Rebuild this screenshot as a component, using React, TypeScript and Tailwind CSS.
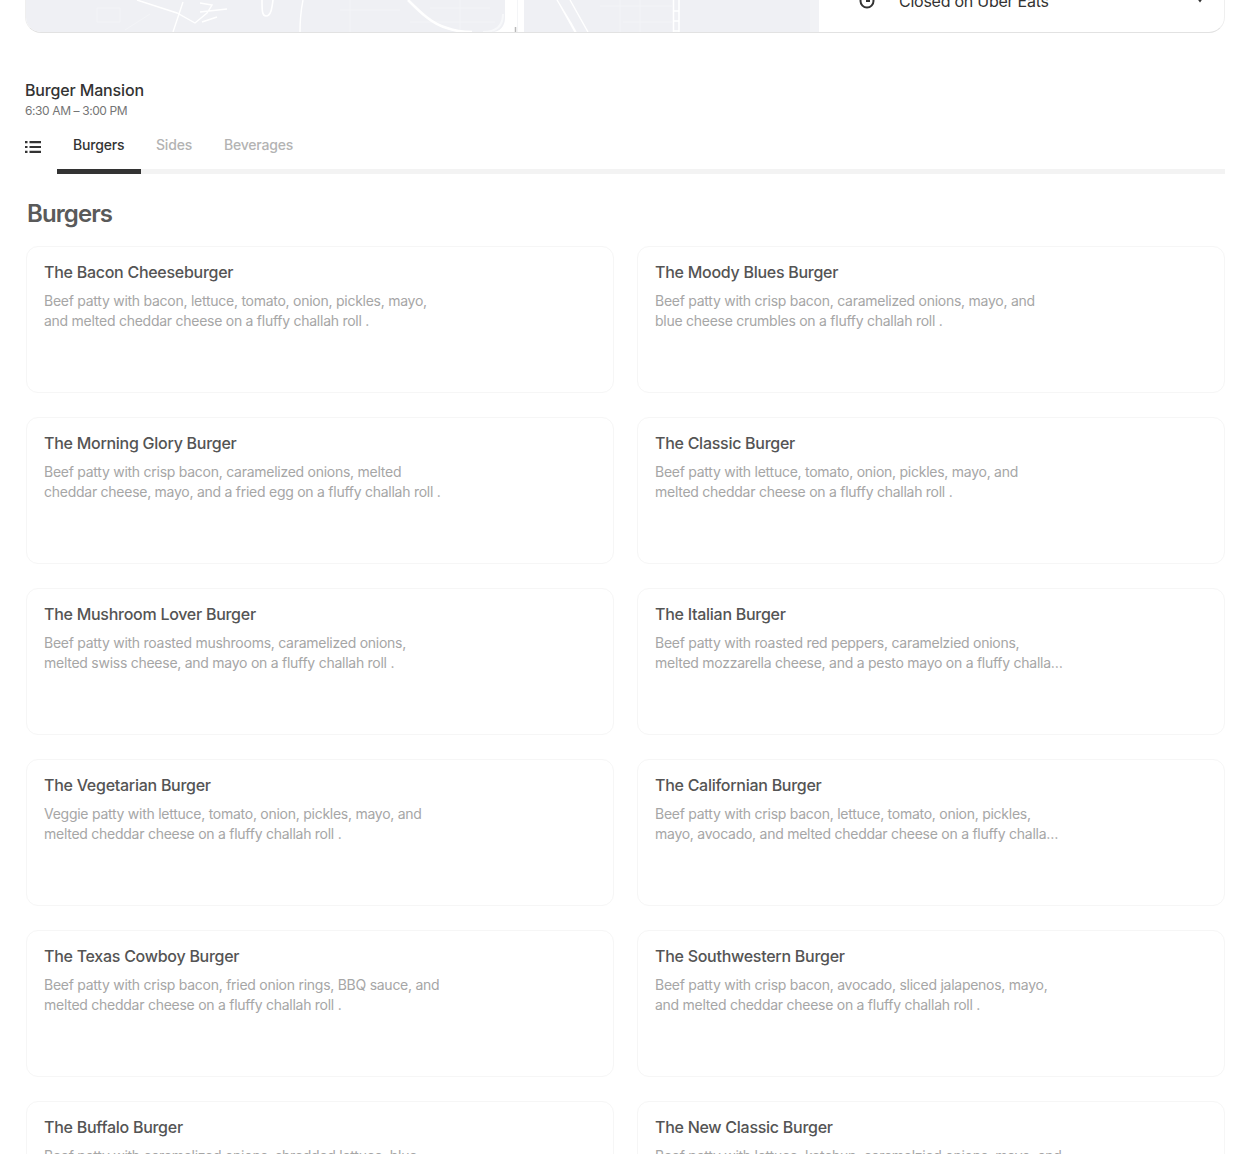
const ITEMS = [
  ["The Bacon Cheeseburger", "Beef patty with bacon, lettuce, tomato, onion, pickles, mayo, and melted cheddar cheese on a fluffy challah roll ."],
  ["The Moody Blues Burger", "Beef patty with crisp bacon, caramelized onions, mayo, and blue cheese crumbles on a fluffy challah roll ."],
  ["The Morning Glory Burger", "Beef patty with crisp bacon, caramelized onions, melted cheddar cheese, mayo, and a fried egg on a fluffy challah roll ."],
  ["The Classic Burger", "Beef patty with lettuce, tomato, onion, pickles, mayo, and melted cheddar cheese on a fluffy challah roll ."],
  ["The Mushroom Lover Burger", "Beef patty with roasted mushrooms, caramelized onions, melted swiss cheese, and mayo on a fluffy challah roll ."],
  ["The Italian Burger", "Beef patty with roasted red peppers, caramelzied onions, melted mozzarella cheese, and a pesto mayo on a fluffy challah roll ."],
  ["The Vegetarian Burger", "Veggie patty with lettuce, tomato, onion, pickles, mayo, and melted cheddar cheese on a fluffy challah roll ."],
  ["The Californian Burger", "Beef patty with crisp bacon, lettuce, tomato, onion, pickles, mayo, avocado, and melted cheddar cheese on a fluffy challah roll ."],
  ["The Texas Cowboy Burger", "Beef patty with crisp bacon, fried onion rings, BBQ sauce, and melted cheddar cheese on a fluffy challah roll ."],
  ["The Southwestern Burger", "Beef patty with crisp bacon, avocado, sliced jalapenos, mayo, and melted cheddar cheese on a fluffy challah roll ."],
  ["The Buffalo Burger", "Beef patty with caramelized onions, shredded lettuce, blue cheese, and buffalo sauce on a fluffy challah roll ."],
  ["The New Classic Burger", "Beef patty with lettuce, ketchup, caramelzied onions, mayo, and melted cheddar cheese on a fluffy challah roll ."],
];

// coordinates are page pixels, hence the viewBox offset
function MapRoads() {
  return (
    <svg className="block h-[32px] w-[793px]" viewBox="26 0 793 32" fill="none" stroke="#ffffff">
      {/* faint blocks */}
      <path d="M97 8 H120 V22 H97 Z M125 30 L150 14 M620 0 V32 M640 0 V32 M623 22 H672 M600 6 H672 M340 10 H400 M350 0 V32 M430 8 H490 M460 0 V32 M410 22 H495" stroke="#f3f4f7" strokeWidth="1" />
      <path d="M810 0 H819 V32 H810 Z" fill="#f1f2f5" stroke="none" />
      {/* bent road cluster */}
      <path d="M137 0 L177 13 L195 23 L207 13 L212 5 L200 3 M173 32 L183 2 M200 12 L227 9 M217 17 L202 22" strokeWidth="1.4" />
      {/* loop */}
      <path d="M262 0 C262 10 262 16 266 16 C271 16 272 8 273 0" strokeWidth="1.6" />
      <path d="M303 0 C301 10 300 20 300 32" strokeWidth="1.4" />
      <path d="M408 0 C420 12 432 24 447 28 C455 31 462 32 472 32" strokeWidth="2.6" />
      <path d="M503 14 C503 24 498 32 483 32" stroke="#f7f8fa" strokeWidth="2" />
      <path d="M505 0 V18 C505 26 500 32 492 32 H524 V0 Z" fill="#ffffff" stroke="none" />
      <path d="M515.5 27 V32" stroke="#b9b9b9" strokeWidth="1.5" />
      <path d="M517 0 H518 V32 H517 Z" fill="#f4f5f7" stroke="none" />
      <path d="M557 0 L571 23 L576 32 M560 5 L575 32 M570 0 L588 32" strokeWidth="1.4" />
      <path d="M673.5 0 V32 M679 0 V32 M673 11 H679 M673 21 H679 M673 31 H679" strokeWidth="1.5" />
    </svg>
  );
}

export default function App() {
  return (
    <div className="h-[1154px] overflow-hidden bg-white px-[25px] font-['Inter',sans-serif] text-[#333333]">
      <div className="flex h-[33px] overflow-hidden rounded-b-2xl border-x border-b border-x-[#efefef] border-b-[#e2e2e2]">
        <div className="w-[793px] bg-[#eff0f4]">
          <MapRoads />
        </div>
        <div className="-mt-[7px] flex h-4 flex-1 items-center justify-between pl-[40px] pr-[19px] text-base tracking-[-0.25px]">
          <div className="flex items-center gap-6">
            <svg width="16" height="16" viewBox="0 0 16 16" fill="none" stroke="#333333" strokeWidth="2">
              <circle cx="8" cy="8" r="6.5" />
              <path d="M8 4 V8 H11" />
            </svg>
            <span>Closed on Uber Eats</span>
          </div>
          <svg width="10" height="8" viewBox="0 0 10 8" fill="#333333">
            <path d="M1 0 H9 L5 5.5 Z" />
          </svg>
        </div>
      </div>

      <div className="mt-[47px] text-base font-medium leading-5 tracking-[-0.15px]">Burger Mansion</div>
      <div className="mt-[1px] text-xs leading-5 tracking-[-0.4px] text-[#757575]">6:30 AM – 3:00 PM</div>

      <div className="mt-[3px] flex h-[50px]">
        <div className="flex w-8 items-center pb-[4px]">
          <svg width="16" height="12" viewBox="0 0 16 12" fill="#333333">
            <path d="M0 0h2.5v2.2H0zM0 4.9h2.5v2.2H0zM0 9.8h2.5V12H0zM4.5 0H16v2.2H4.5zM4.5 4.9H16v2.2H4.5zM4.5 9.8H16V12H4.5z" />
          </svg>
        </div>
        <div className="flex flex-1 border-b-[5px] border-[#f3f3f3] text-sm font-medium tracking-[-0.2px]">
          <div className="-mb-[5px] w-[84px] border-b-[5px] border-[#333333] pl-4 pt-[11px]">Burgers</div>
          <div className="pl-[15px] pr-4 pt-[11px] text-[#b3b3b3]">Sides</div>
          <div className="px-4 pt-[11px] text-[#b3b3b3]">Beverages</div>
        </div>
      </div>

      <h2 className="mt-[24px] pl-[2px] text-2xl font-semibold leading-8 tracking-[-0.9px] text-[#5a5a5a]">Burgers</h2>

      <div className="ml-[1px] mt-4 grid grid-cols-2 gap-x-[23px] gap-y-[24px]">
        {ITEMS.map(([name, desc]) => (
          <div key={name} className="h-[147px] rounded-xl border border-[#f6f6f6] px-[17px] py-[15px]">
            <div className="text-base font-medium leading-5 tracking-[-0.27px] text-[#545454]">{name}</div>
            <p className="mt-[9px] line-clamp-2 w-[409px] text-sm leading-5 tracking-[-0.26px] text-[#a6a6a6]">{desc}</p>
          </div>
        ))}
      </div>
    </div>
  );
}
